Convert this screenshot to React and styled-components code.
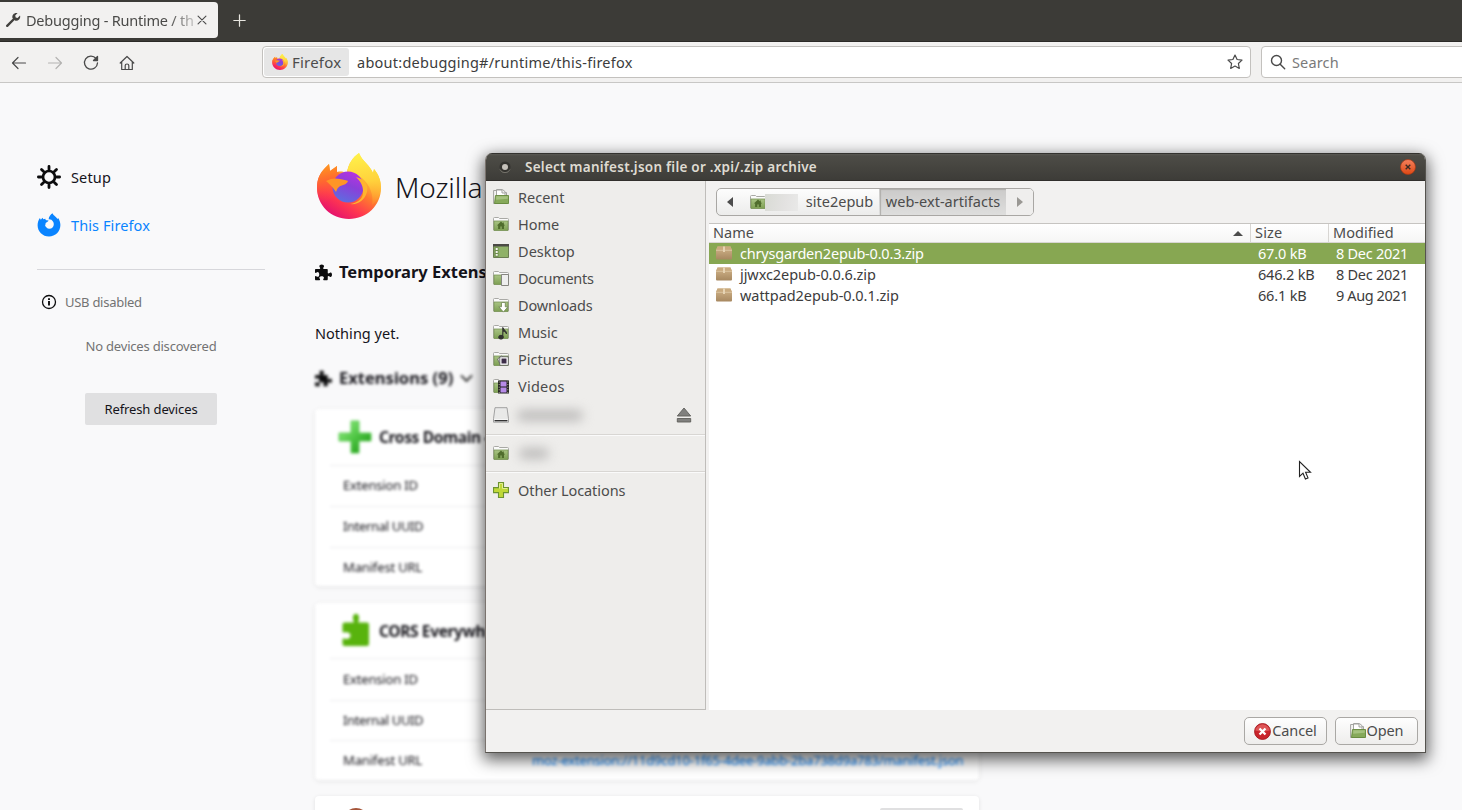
import React from "react";
import styled, { createGlobalStyle, css } from "styled-components";

const Global = createGlobalStyle`
  * { box-sizing: border-box; }
  html, body { margin: 0; padding: 0; overflow: hidden; }
  body { font-family: "Noto Sans", "Open Sans", sans-serif; font-size: 14.5px; color: #4c4c4c; }
  h1, h2, h3, p { margin: 0; }
`;

/* One run of text: size, weight, colour and tracking vary. */
const TextSpan = styled.span`
  display: inline-block;
  white-space: nowrap;
  font-size: ${(p) => p.$size || 14.5}px;
  font-weight: ${(p) => p.$weight || 400};
  letter-spacing: ${(p) => p.$track || 0}px;
  color: ${(p) => p.$color || "inherit"};
  line-height: 20px;
`;
const Text = ({ size, weight, track, color, children }) => (
  <TextSpan $size={size} $weight={weight} $track={track} $color={color}>{children}</TextSpan>
);

const Browser = styled.div`
  position: relative;
  width: 1462px;
  height: 810px;
  overflow: hidden;
  display: flex;
  flex-direction: column;
  background: #f9f9fa;
`;
const TabStrip = styled.header`
  height: 42px;
  flex: none;
  display: flex;
  align-items: flex-start;
  padding-top: 2px;
  background: #3c3b37;
  border-bottom: 1px solid #2b2a27;
`;
const Tab = styled.div`
  width: 218px;
  height: 36px;
  display: flex;
  align-items: center;
  padding-left: 5px;
  background: #f2f1f0;
  border-radius: 0 4px 4px 0;
  color: #4a4a48;
`;
const TabTitle = styled.div`
  width: 169px;
  margin-left: 5px;
  overflow: hidden;
  white-space: nowrap;
  mask-image: linear-gradient(to right, #000 142px, transparent 178px);
`;
const NewTab = styled.div`
  display: flex;
  padding: 12px 15px;
`;
const NavBar = styled.nav`
  height: 41px;
  flex: none;
  display: flex;
  align-items: center;
  padding-left: 11px;
  background: #f2f1f0;
  border-bottom: 1px solid #c8c7c5;
`;
const NavButtons = styled.div`
  width: 251px;
  flex: none;
  display: flex;
  gap: 20px;
  padding-top: 1px;
`;
const Field = styled.div`
  height: 32px;
  flex: none;
  display: flex;
  align-items: center;
  background: #fff;
  border: 1px solid #c3c1be;
  border-radius: 4px;
`;
const UrlField = styled(Field)`
  width: 989px;
  padding: 0 7px 0 1px;
`;
const UrlText = styled.div`
  flex: 1;
  padding-left: 8px;
`;
const SearchField = styled(Field)`
  width: 240px;
  margin-left: 10px;
  padding-left: 8px;
  gap: 6px;
`;
const Identity = styled.div`
  width: 85px;
  height: 28px;
  display: flex;
  align-items: center;
  gap: 4px;
  padding-left: 8px;
  border-radius: 3px;
  background: #e6e6e6;
`;

const Page = styled.div`
  flex: 1;
  display: flex;
  color: #15141a;
`;
const Side = styled.aside`
  width: 315px;
  padding: 70px 50px 0 37px;
`;
const SideLink = styled.div`
  height: 48px;
  display: flex;
  align-items: center;
  gap: 10px;
`;
const Rule = styled.hr`
  margin: 20px 0 0;
  border: 0;
  border-top: 1px solid #d7d7db;
`;
const UsbStatus = styled.div`
  display: flex;
  align-items: center;
  gap: 8px;
  padding: 22px 0 0 4px;
`;
const Devices = styled.div`
  display: flex;
  flex-direction: column;
  align-items: center;
  gap: 37px;
  padding-top: 24px;
`;
const RefreshButton = styled.button`
  width: 132px;
  height: 32px;
  padding: 0;
  border: 0;
  border-radius: 2px;
  background: #e0e0e1;
  color: #15141a;
  font-family: inherit;
`;
const Main = styled.main`
  width: 664px;
  padding-top: 68px;
`;
const Brand = styled.div`
  height: 70px;
  display: flex;
  align-items: center;
  gap: 13px;
  padding-left: 1px;
  & > span { padding-top: 1px; }
`;
const SectionHead = styled.h2`
  display: flex;
  align-items: center;
  gap: 7px;
  height: 24px;
  margin-top: ${(p) => p.$top}px;
  ${(p) => p.$soft && css`filter: blur(1.7px);`}
`;
const Cards = styled.div`
  display: flex;
  flex-direction: column;
  gap: 16.5px;
  padding-top: 19px;
`;
const Card = styled.article`
  height: 177px;
  padding: 0 15px;
  background: #fff;
  border-radius: 4px;
  box-shadow: 0 1px 4px rgba(12, 12, 13, 0.1);
  ${(p) => p.$soft && css`filter: blur(1.6px);`}
`;
const CardHead = styled.div`
  height: 56.5px;
  display: flex;
  align-items: center;
  gap: 7px;
  padding-left: 8px;
  border-bottom: 1px solid #ececee;
  & > span { padding-top: 1px; }
`;
const CardRow = styled.div`
  height: 40.5px;
  display: flex;
  align-items: center;
  padding: 0 0 2px 13px;
  & + & { border-top: 1px solid #ececee; }
`;
const Label = styled.div`
  width: 189px;
  flex: none;
`;
const CardPeek = styled(CardHead)`
  height: 44px;
  padding: 12px 1px 0 13px;
  justify-content: space-between;
  align-items: flex-start;
  border: 0;
`;
const RemoveButton = styled.div`
  width: 83px;
  height: 32px;
  border-radius: 2px;
  background: #e0e0e1;
`;

const Dialog = styled.section`
  position: absolute;
  left: 485px;
  top: 153px;
  width: 941px;
  height: 600px;
  display: flex;
  flex-direction: column;
  background: #f2f1f0;
  border: 1px solid #55534e;
  border-left-color: #7a736e;
  border-top: 0;
  border-radius: 7px 7px 0 0;
  overflow: hidden;
`;
const DialogShadow = styled.div`
  position: absolute;
  left: 485px;
  top: 153px;
  width: 941px;
  height: 600px;
  border-radius: 7px 7px 0 0;
  box-shadow: 0 5px 16px 2px rgba(0, 0, 0, 0.62);
`;
const TitleBar = styled.div`
  height: 28px;
  flex: none;
  display: flex;
  align-items: center;
  margin: 0 -1px;
  padding: 0 10px 0 14px;
  background: linear-gradient(#5a5953 0, #4d4c46 2px, #3d3c38 100%);
  border-top: 1px solid #34332f;
  border-bottom: 1px solid #312f2c;
  color: #dfdbd2;
`;
const TitleText = styled.div`
  flex: 1;
  padding: 0 0 2px 14px;
`;
const DialogBody = styled.div`
  height: 529px;
  flex: none;
  display: flex;
`;
const Places = styled.div`
  width: 220px;
  padding-top: 3px;
  background: #eeedeb;
  border-right: 1px solid #bfbdba;
  border-bottom: 1px solid #bfbdba;
`;
const Place = styled.div`
  height: ${(p) => p.$h || 27}px;
  display: flex;
  align-items: center;
  gap: 9px;
  padding: 0 13px ${(p) => (p.$h === 30 ? 0 : 1)}px 7px;
  & > span { padding-bottom: 1px; }
`;
const PlaceRule = styled.div`
  height: 2px;
  margin-top: ${(p) => p.$top || 0}px;
  border-top: 1px solid #d8d6d3;
  border-bottom: 1px solid #fafafa;
`;
const Redacted = styled.div`
  height: 24px;
  flex: ${(p) => (p.$grow ? 1 : "none")};
  display: flex;
  align-items: center;
  margin-left: -5px;
  span {
    width: ${(p) => p.$w}px;
    height: 11px;
    margin-left: ${(p) => p.$x || 0}px;
    background: #bdbcbb;
    border-radius: 6px;
    filter: blur(5.5px);
  }
`;
const Files = styled.div`
  flex: 1;
  display: flex;
  flex-direction: column;
`;
const PathBar = styled.div`
  height: 42px;
  flex: none;
  padding: 7px 0 0 10px;
`;
const PathGroup = styled.div`
  width: 318px;
  height: 28px;
  display: flex;
  border: 1px solid #a9a7a4;
  border-radius: 5px;
  overflow: hidden;
  background: linear-gradient(#fdfdfd, #ececeb);
`;
const Crumb = styled.div`
  width: ${(p) => p.$w}px;
  flex: none;
  height: 100%;
  display: flex;
  align-items: center;
  justify-content: center;
  & > span { padding-bottom: 2px; }
  & + & { border-left: 1px solid ${(p) => (p.$flat ? "transparent" : "#cfcdca")}; }
  ${(p) => p.$on && css`
    background: linear-gradient(#cbcac9, #dededd);
    box-shadow: inset 1px 1px 1px #b0aeab;
  `}
  ${(p) => p.$off && css`background: #efeeed;`}
`;
const HomeCrumb = styled(Crumb)`
  justify-content: flex-start;
  padding-left: 6px;
`;
const CrumbMask = styled.div`
  width: 33px;
  height: 17px;
  margin-left: -1px;
  background: linear-gradient(100deg, #d9dbd5, #e3e2e1 60%, #e9e9e8);
`;
const Table = styled.div`
  flex: 1;
  margin-left: 3px;
  background: #fff;
  border-top: 1px solid #c6c4c1;
`;
const Columns = styled.div`
  display: grid;
  grid-template-columns: 541px 78px 1fr;
  align-items: center;
`;
const HeadRow = styled(Columns)`
  height: 19px;
  background: linear-gradient(#fff, #f6f6f5);
  border-bottom: 1px solid #d8d6d3;
`;
const HeadCell = styled.div`
  height: 18px;
  display: flex;
  align-items: center;
  justify-content: space-between;
  padding: 0 7px 0 4px;
  & > span { padding-bottom: 2px; }
  & + & { border-left: 1px solid #d8d6d3; }
`;
const FileRow = styled(Columns)`
  height: 21px;
  padding-bottom: 1px;
  color: ${(p) => (p.$on ? "#fff" : "#3c3c3c")};
  background: ${(p) => (p.$on ? "#87a752" : "#fff")};
`;
const FileName = styled.div`
  height: 20px;
  display: flex;
  align-items: center;
  gap: 8px;
  padding-left: 7px;
  & > span { margin-top: -1px; }
`;
const Cell = styled.div`
  height: 20px;
  padding-left: 8px;
  & > span { margin-top: -0.5px; }
`;
const Actions = styled.div`
  flex: 1;
  display: flex;
  justify-content: flex-end;
  gap: 8px;
  padding: 7px 7px 0 0;
`;
const ActionButton = styled.button`
  width: 83px;
  height: 28px;
  display: flex;
  align-items: center;
  justify-content: center;
  gap: 1px;
  padding: 0;
  font-family: inherit;
  color: #4c4c4c;
  background: linear-gradient(#fefefe, #eeedec);
  border: 1px solid #aaa8a5;
  border-radius: 5px;
  & > span { padding-bottom: 2px; }
`;
const Pointer = styled.svg`
  position: absolute;
  left: 1298px;
  top: 460px;
`;

/* Icons */
const Line = ({ size = 16, w = 1.2, color = "#4a4a4a", children }) => (
  <svg width={size} height={size} viewBox="0 0 16 16" fill="none" stroke={color} strokeWidth={w} strokeLinecap="round" strokeLinejoin="round">{children}</svg>
);
const Wrench = () => (
  <svg width="16" height="16" viewBox="0 0 16 16" fill="none">
    <path d="M2.2 13.8 9 7" stroke="#42413e" strokeWidth="2.4" strokeLinecap="round" />
    <path d="M12.6 1.1c-1.6-.5-3.4 0-4.4 1.3-.9 1.1-1.1 2.4-.7 3.7l2.5 2.5c1.5.4 3 .1 4.1-1 1.1-1.1 1.4-2.6.9-4l-2.4 2.4-1.9-.4-.5-2z" fill="#42413e" />
  </svg>
);
const FirefoxLogo = ({ size, id }) => (
  <svg width={size} height={size} viewBox="0 0 66 66">
    <defs>
      <linearGradient id={id + "b"} x1=".85" y1=".1" x2=".3" y2="1">
        <stop offset="0" stopColor="#fff44f" /><stop offset=".25" stopColor="#ffc436" />
        <stop offset=".5" stopColor="#ff7a2e" /><stop offset=".75" stopColor="#ff3750" /><stop offset="1" stopColor="#e3106f" />
      </linearGradient>
      <linearGradient id={id + "l"} x1=".3" y1="0" x2=".5" y2="1">
        <stop offset="0" stopColor="#ff9a1f" /><stop offset=".4" stopColor="#ff6b2d" stopOpacity=".9" /><stop offset="1" stopColor="#ff3750" stopOpacity="0" />
      </linearGradient>
      <linearGradient id={id + "p"} x1=".7" y1="0" x2=".3" y2="1">
        <stop offset="0" stopColor="#b833e1" /><stop offset=".45" stopColor="#8b3fd9" /><stop offset="1" stopColor="#5b6fe0" />
      </linearGradient>
      <linearGradient id={id + "y"} x1=".5" y1="0" x2=".6" y2="1">
        <stop offset="0" stopColor="#fff14a" /><stop offset=".55" stopColor="#ffd23c" /><stop offset="1" stopColor="#ffa02e" stopOpacity=".3" />
      </linearGradient>
    </defs>
    <path d="M43 0c3 8 11 12 14 20l1-4c5 6 7 12 7 19 0 17-14 31-32 31C15 66 1 52 1 35c0-9 3-15 8-20l4-4 1 7 7-5v6c4-1 7 0 10 1 1-9 6-16 12-20z" fill={`url(#${id}b)`} />
    <path d="M1 35c0-9 3-15 8-20l4-4 1 7 7-5v6c8 4 10 14 2 22L7 50C3 46 1 41 1 35z" fill={`url(#${id}l)`} />
    <path d="M43 0c3 8 11 12 14 20l1-4c5 6 7 12 7 19-1 8-4 13-9 17 2-10-2-20-10-27-5-3-9-6-15-5 1-9 6-16 12-20z" fill={`url(#${id}y)`} />
    <circle cx="32" cy="34" r="15.5" fill={`url(#${id}p)`} />
    <path d="M40 24c8 2 13 8 11 15-2 8-9 13-17 12 8-1 14-6 13-13 0-6-3-10-7-14z" fill="#ffb52e" />
    <path d="M10 28c5-3 10-3 14-2 3 1 7 1 8 2-1 4-7 4-9 6-2 1-2 3-3 5-2-3-4-6-10-11z" fill="#ff9526" />
  </svg>
);
const FirefoxMark = () => (
  <svg width="24" height="24" viewBox="0 0 24 24" fill="#0a84ff">
    <path fillRule="evenodd" d="M15.5.3c.6 2.200 3.700 3.500 5.100 5.700l.5-.9c1.400 2 2.300 4.500 2.300 7C23.400 18.500 18.400 23.600 12 23.600S.6 18.500.6 12.300c0-3 .9-5.300 2.300-7.300l.9 1.700 1.700-2 .8 1.500 2-.5c.2 1 .7 1.500 1.500 1.600l1.800.2c-.3 1.400-2.400 1.600-2.900 2.500-.3.700.2 1.800-.7 2.100.5 2 2.200 3.700 4.300 3.700 2.700 0 4.500-1.900 4.500-4.500 0-2.200-1-3.400-2.400-4.600-.8-.4-1.900-.6-2.800-.5.300-2.400 2-4.900 3.900-5.900z" />
  </svg>
);
const Gear = () => (
  <svg width="24" height="24" viewBox="0 0 24 24" fill="none" stroke="#0c0c0d" strokeLinecap="round">
    <circle cx="12" cy="12" r="6" strokeWidth="2.7" />
    <path strokeWidth="2.8" d="M12 1.400v3M12 19.600v3M1.400 12h3M19.600 12h3M4.500 4.500l2.100 2.100M17.400 17.400l2.100 2.100M4.500 19.500l2.100-2.100M17.400 6.600l2.100-2.100" />
  </svg>
);
const Info = () => (
  <svg width="16" height="16" viewBox="0 0 16 16" fill="none" stroke="#0c0c0d">
    <circle cx="8" cy="8" r="6.500" strokeWidth="1.300" /><path d="M8 7v4.500M8 4.200v1.800" strokeWidth="1.900" />
  </svg>
);
const Puzzle = () => (
  <svg width="17" height="17" viewBox="0 0 16 16" fill="#0c0c0d">
    <path d="M14.500 8c-.6 0-.8.900-2.100.9-.2 0-.4-.2-.4-.4V5.500c0-.5-.4-.9-.9-.9H8.200c-.3 0-.5-.2-.5-.4 0-1 .8-1.100.8-2C8.500 1.300 7.500.5 6.300.5s-2.200.8-2.200 1.700c0 .9.800 1 .8 2 0 .2-.2.400-.5.400H.9c-.5 0-.9.400-.9.900v2.300c0 .4.300.6.600.6.900 0 1-.8 1.900-.8.900 0 1.500 1 1.500 2.200s-.6 2.200-1.500 2.200c-.9 0-1-.8-1.900-.8-.3 0-.6.200-.6.600v2.600c0 .5.400.9.900.9h3.300c.3 0 .6-.2.600-.6 0-.9-.7-1-.7-1.800 0-.9 1-1.400 2.200-1.400s2.100.5 2.100 1.400c0 .8-.7.900-.7 1.800 0 .4.300.6.600.6h2.800c.5 0 .9-.4.9-.9v-2.600c0-.2.200-.5.400-.5 1.300 0 1.500.9 2.100.9S16 11.400 16 10s-.7-2-1.500-2z" />
  </svg>
);
const BigPlus = () => (
  <svg width="34" height="34" viewBox="0 0 34 34">
    <defs><linearGradient id="gp" x1="0" y1="0" x2="1" y2="1"><stop offset=".1" stopColor="#8be87c" /><stop offset=".5" stopColor="#4fc544" /><stop offset=".9" stopColor="#1f9a17" /></linearGradient></defs>
    <path d="M13 1h8v12h12v8H21v12h-8V21H1v-8h12z" fill="url(#gp)" stroke="#4fc544" strokeWidth=".8" />
  </svg>
);
const BigPuzzle = () => (
  <svg width="34" height="34" viewBox="0 0 34 34" fill="#58b30d">
    <path d="M15 9.500c.8 0 1-.5.6-1.500C14 4 15.500.8 18 .8S22 4 20.500 8c-.4 1-.2 1.500.6 1.500H29q2 0 2 2V31q0 2-2 2H6.500q-2 0-2-2v-4.500c0-1 .5-1.300 1.500-1 4 1.200 6.500-.5 6.500-3S10 18.500 6 19.500c-1 .3-1.500 0-1.500-1v-7q0-2 2-2z" />
  </svg>
);
const FolderBase = ({ children }) => (
  <svg width="16" height="16" viewBox="0 0 16 16">
    <defs><linearGradient id="fg" x1="0" y1="0" x2="0" y2="1"><stop offset="0" stopColor="#a9c484" /><stop offset="1" stopColor="#7d9f52" /></linearGradient></defs>
    <path d="M.5 14V2.500q0-1 1-1h4l1 1h8q1 0 1 1V14z" fill="#fafafa" stroke="#a9a9a5" />
    <path d="M1 5h14v9.500H1z" fill="url(#fg)" stroke="#7a9657" strokeWidth=".8" />
    {children}
  </svg>
);
const placeArt = {
  home: <path d="M8 5.600 3.900 9.600h1.200V13h2.200v-2.400h1.500V13H11V9.600h1.200L10.800 8.200V6.500h-1v.8z" fill="#506d2d" />,
  documents: <path d="M8.500 4.500h7v11h-7z" fill="#eee" stroke="#858580" />,
  downloads: <path d="M8.500 5.500h3.800v4.300h2.600l-4.500 5.300-4.500-5.300h2.600z" fill="#fff" stroke="#708555" strokeWidth=".8" />,
  music: <g fill="#30302e" stroke="#30302e"><ellipse cx="8" cy="13.200" rx="2.300" ry="1.900" /><path d="M9.800 13V3.500c.6 2.500 3.800 2.700 3.700 6.500-.5-1.800-1.600-2.500-3.200-2.700" /></g>,
  pictures: <g><path d="m4.500 8 4-3 2 1-1 7-3-1z" fill="#ddd" stroke="#555" strokeWidth=".7" /><path d="M6.800 5.800h8.500v8.500H6.800z" fill="#fff" stroke="#555" strokeWidth=".8" /><path d="M8.500 7.500h5v5h-5z" fill="#3c2c48" /></g>,
  videos: <g><path d="M5 2.500h11V15.500H5z" fill="#222" /><path d="M7.500 3.500h6v5h-6zM7.500 9.500h6v5h-6z" fill="#b78be8" /><path d="M6.200 3.500v11.500M14.800 3.500v11.500" stroke="#c8c8a0" strokeWidth=".9" strokeDasharray="1 1.600" /></g>,
};
const FolderIcon = ({ kind }) => <FolderBase>{placeArt[kind]}</FolderBase>;
const OpenFolder = () => (
  <svg width="16" height="16" viewBox="0 0 16 16">
    <path d="M.6 14.500V1.500h3V.6h6l2.400 2v1h1.500v10.900z" fill="#f4f4f2" stroke="#9b9b97" strokeWidth=".9" />
    <path d="M3.500 6V1h5.500v3h3v2.500" fill="#fff" stroke="#9b9b97" strokeWidth=".9" />
    <path d="M2.500 6.500h13v8H1.500z" fill="#86a95a" stroke="#64883a" strokeWidth=".9" />
    <path d="M3.200 7.300h11.600v2.500l-11.600 1z" fill="#a5c27f" />
  </svg>
);
const DesktopIcon = () => (
  <svg width="16" height="16" viewBox="0 0 16 16">
    <path d="M.5 1.500h15v13H.5z" fill="#8fb168" stroke="#6a7d52" /><path d="M0 1h16v2.500H0z" fill="#4b4a45" />
    <path d="M1.500 4.200h4v9.600h-4z" fill="#6f8c4e" /><path d="M2.700 5h2v2h-2zM2.700 8h2v2h-2zM2.700 11h2v1.800h-2z" fill="#f4f6ef" />
  </svg>
);
const DriveIcon = () => (
  <svg width="16" height="16" viewBox="0 0 16 16">
    <path d="M2 .7h12l1.500 11v3.500H.5v-3.500z" fill="#e9e9e8" stroke="#999" strokeWidth=".9" />
    <path d="M1 12h14v2.600H1z" fill="#f6f6f6" /><path d="M1.500 13.700h13" stroke="#333" strokeWidth="1.400" />
  </svg>
);
const EjectIcon = () => (
  <svg width="16" height="16" viewBox="0 0 16 16" fill="#80807e" stroke="#5d5d5a" strokeWidth=".9">
    <path d="M8 1 14.700 9H1.300zM1.300 11.500h13.400v3.500H1.300z" />
  </svg>
);
const AddIcon = () => (
  <svg width="16" height="16" viewBox="0 0 16 16">
    <path d="M5.500.6h5v5h5v5h-5v5h-5v-5h-5v-5h5z" fill="#bfd838" stroke="#6c9330" strokeWidth="1.100" />
    <path d="M6.500 6.500v-5h3v5h5" fill="none" stroke="#e3ee91" />
  </svg>
);
const Package = () => (
  <svg width="16" height="16" viewBox="0 0 16 16">
    <defs><linearGradient id="pk" x1="0" y1="0" x2="0" y2="1"><stop offset="0" stopColor="#d3b68c" /><stop offset="1" stopColor="#a78860" /></linearGradient></defs>
    <path d="M1.500 1.500h13L16 5v8.500q0 1-1 1H1q-1 0-1-1V5z" fill="url(#pk)" />
    <path d="M1.500 1.500h13L15.800 5H.2z" fill="#c9aa7e" /><path d="M0 5.300h16" stroke="#e0cba8" strokeWidth=".8" />
    <path d="M7 1.500h2v5.500H7z" fill="#e6d3b3" />
  </svg>
);
const CancelIcon = () => (
  <svg width="17" height="17" viewBox="0 0 16 16">
    <circle cx="8" cy="8" r="7.500" fill="#c9242b" stroke="#a3171d" strokeWidth=".8" />
    <path d="M1.200 7a6.900 6.900 0 0 1 13.600 0Q8 9 1.200 7z" fill="#e5696a" opacity=".7" />
    <path d="m5.200 5.200 5.600 5.600M10.800 5.200l-5.600 5.600" stroke="#fff" strokeWidth="2.200" />
  </svg>
);
const WindowDot = () => (
  <svg width="12" height="12" viewBox="0 0 12 12"><circle cx="6" cy="6" r="5.500" fill="#34332f" /><path d="M1 8.500a5.500 5.500 0 0 0 10 0" stroke="#77756d" fill="none" /><circle cx="6" cy="6" r="3" fill="#c5c1ba" /></svg>
);
const CloseDot = () => (
  <svg width="16" height="16" viewBox="0 0 16 16">
    <defs><linearGradient id="cd" x1="0" y1="0" x2="0" y2="1"><stop offset="0" stopColor="#f4815d" /><stop offset="1" stopColor="#dd4814" /></linearGradient></defs>
    <circle cx="8" cy="8" r="7.500" fill="url(#cd)" stroke="#a83a16" strokeWidth=".7" /><path d="m5.700 5.700 4.600 4.600M10.300 5.700l-4.600 4.600" stroke="#3c2b24" strokeWidth="1.400" />
  </svg>
);
const Arrow = ({ d, color = "#4c4c4c", w = 6, h = 10 }) => <svg width={w} height={h} viewBox={`0 0 ${w} ${h}`}><path d={d} fill={color} /></svg>;

const places = [
  ["Recent", <OpenFolder />, 0], ["Home", <FolderIcon kind="home" />, 0], ["Desktop", <DesktopIcon />, 0.05],
  ["Documents", <FolderIcon kind="documents" />, -0.28], ["Downloads", <FolderIcon kind="downloads" />, -0.15],
  ["Music", <FolderIcon kind="music" />, 0], ["Pictures", <FolderIcon kind="pictures" />, 0.03], ["Videos", <FolderIcon kind="videos" />, 0.25],
];
const files = [
  { name: "chrysgarden2epub-0.0.3.zip", size: "67.0 kB", date: "8 Dec 2021", on: true, track: -0.2, dateTrack: -0.27 },
  { name: "jjwxc2epub-0.0.6.zip", size: "646.2 kB", date: "8 Dec 2021", track: -0.07, dateTrack: -0.27 },
  { name: "wattpad2epub-0.0.1.zip", size: "66.1 kB", date: "9 Aug 2021", track: -0.05, dateTrack: -0.4 },
];

function ExtensionCard({ icon, name, link }) {
  return (
    <Card $soft>
      <CardHead>{icon}<Text size={15.5} weight={700} track={-0.36}>{name}</Text></CardHead>
      <CardRow><Label><Text size={13} track={-0.18}>Extension ID</Text></Label></CardRow>
      <CardRow><Label><Text size={13} track={-0.35}>Internal UUID</Text></Label></CardRow>
      <CardRow><Label><Text size={13} track={-0.15}>Manifest URL</Text></Label>{link && <Text size={13} color="#0a84ff" track={-0.19}>{link}</Text>}</CardRow>
    </Card>
  );
}

export default function App() {
  return (
    <>
      <Global />
      <Browser>
        <TabStrip>
          <Tab>
            <Wrench />
            <TabTitle><Text track={-0.22}>Debugging - Runtime / th</Text></TabTitle>
            <Line size={14} w={1.3}><path d="m3.500 3.500 9 9M12.500 3.500l-9 9" /></Line>
          </Tab>
          <NewTab><Line size={13} w={1.5} color="#e8e6e0"><path d="M8 1v14M1 8h14" /></Line></NewTab>
        </TabStrip>
        <NavBar>
          <NavButtons>
            <Line><path d="M14.500 8h-13M7 2.500 1.500 8 7 13.500" /></Line>
            <Line color="#b4b3b1"><path d="M1.500 8h13M9 2.500 14.500 8 9 13.500" /></Line>
            <Line w={1.3}><path d="M13 3.500A6.500 6.500 0 1 0 14.500 8" /><path d="M14.500 1.500v4h-4z" fill="#4a4a4a" /></Line>
            <Line><path d="M1.200 8 8 1.500 14.800 8M2.700 6.800v7.700h10.600V6.800M6.200 14.500v-4q0-1.500 1.800-1.500t1.800 1.500v4" /></Line>
          </NavButtons>
          <UrlField>
            <Identity><FirefoxLogo size={16} id="s" /><Text size={15} track={0.2}>Firefox</Text></Identity>
            <UrlText><Text color="#3c3c3c" track={0.25}>about:debugging#/runtime/this-firefox</Text></UrlText>
            <Line><path d="m8 1 2.100 4.500 4.900.6-3.600 3.400.9 4.900L8 12l-4.300 2.400.9-4.900L1 6.100l4.900-.6z" /></Line>
          </UrlField>
          <SearchField>
            <Line w={1.4}><circle cx="6.500" cy="6.500" r="5" /><path d="m10.200 10.200 4.500 4.500" /></Line>
            <Text color="#7a7a7a" track={0.15}>Search</Text>
          </SearchField>
        </NavBar>
        <Page>
          <Side>
            <SideLink><Gear /><Text track={0.15}>Setup</Text></SideLink>
            <SideLink><FirefoxMark /><Text color="#0a84ff" track={0.1}>This Firefox</Text></SideLink>
            <Rule />
            <UsbStatus><Info /><Text size={13} color="#737373" track={-0.27}>USB disabled</Text></UsbStatus>
            <Devices>
              <Text size={13} color="#737373" track={-0.2}>No devices discovered</Text>
              <RefreshButton><Text size={13} track={-0.12}>Refresh devices</Text></RefreshButton>
            </Devices>
          </Side>
          <Main>
            <Brand><FirefoxLogo size={66} id="l" /><Text size={28} weight={300} track={-0.1}>Mozilla</Text></Brand>
            <SectionHead $top={39}><Puzzle /><Text size={16.5} weight={700}>Temporary Extens</Text></SectionHead>
            <SectionHead $top={37} as="p"><Text track={0.03}>Nothing yet.</Text></SectionHead>
            <SectionHead $top={21} $soft><Puzzle /><Text size={16.5} weight={700} track={0.02}>Extensions (9)</Text><Line w={2.8} size={13}><path d="m2 5 6 6 6-6" /></Line></SectionHead>
            <Cards>
              <ExtensionCard icon={<BigPlus />} name="Cross Domain -" />
              <ExtensionCard icon={<BigPuzzle />} name="CORS Everywh" link="moz-extension://11d9cd10-1f65-4dee-9abb-2ba738d9a783/manifest.json" />
              <Card>
                <CardPeek>
                  <svg width="26" height="26" viewBox="0 0 26 26"><circle cx="13" cy="13" r="13" fill="#a5553a" /></svg>
                  <RemoveButton />
                </CardPeek>
              </Card>
            </Cards>
          </Main>
        </Page>
        <DialogShadow />
        <Dialog>
          <TitleBar>
            <WindowDot />
            <TitleText><Text size={13.5} weight={600} track={0.25}>Select manifest.json file or .xpi/.zip archive</Text></TitleText>
            <CloseDot />
          </TitleBar>
          <DialogBody>
            <Places>
              {places.map(([name, icon, track]) => <Place key={name}>{icon}<Text track={track}>{name}</Text></Place>)}
              <Place $h={30}><DriveIcon /><Redacted $grow $w={66} $x={4}><span /></Redacted><EjectIcon /></Place>
              <PlaceRule $top={4} />
              <Place $h={35}><FolderIcon kind="home" /><Redacted $w={30} $x={6}><span /></Redacted></Place>
              <PlaceRule />
              <Place $h={35}><AddIcon /><Text track={-0.08}>Other Locations</Text></Place>
            </Places>
            <Files>
              <PathBar>
                <PathGroup>
                  <Crumb $w={26}><Arrow d="M6 0v10L0 5z" /></Crumb>
                  <HomeCrumb $w={56}><FolderIcon kind="home" /><CrumbMask /></HomeCrumb>
                  <Crumb $w={80}><Text>site2epub</Text></Crumb>
                  <Crumb $w={127} $on><Text track={0.03}>web-ext-artifacts</Text></Crumb>
                  <Crumb $w={27} $flat $off><Arrow d="M0 0v10l6-5z" color="#9a9894" /></Crumb>
                </PathGroup>
              </PathBar>
              <Table>
                <HeadRow>
                  <HeadCell><Text>Name</Text><Arrow w={10} h={5} d="M5 0 10 5H0z" /></HeadCell>
                  <HeadCell><Text track={0.2}>Size</Text></HeadCell>
                  <HeadCell><Text track={0.05}>Modified</Text></HeadCell>
                </HeadRow>
                {files.map((f) => (
                  <FileRow key={f.name} $on={f.on}>
                    <FileName><Package /><Text track={f.track}>{f.name}</Text></FileName>
                    <Cell><Text track={-0.18}>{f.size}</Text></Cell>
                    <Cell><Text track={f.dateTrack}>{f.date}</Text></Cell>
                  </FileRow>
                ))}
              </Table>
            </Files>
          </DialogBody>
          <Actions>
            <ActionButton><CancelIcon /><Text track={-0.1}>Cancel</Text></ActionButton>
            <ActionButton><OpenFolder /><Text track={-0.1}>Open</Text></ActionButton>
          </Actions>
        </Dialog>
        <Pointer width="14" height="21" viewBox="0 0 14 21">
          <path d="M1.500 1.500v15l3.500-3.300 2.400 5.800 2.600-1.100-2.400-5.600h4.900z" fill="#fff" stroke="#222" strokeWidth="1.100" />
        </Pointer>
      </Browser>
    </>
  );
}
